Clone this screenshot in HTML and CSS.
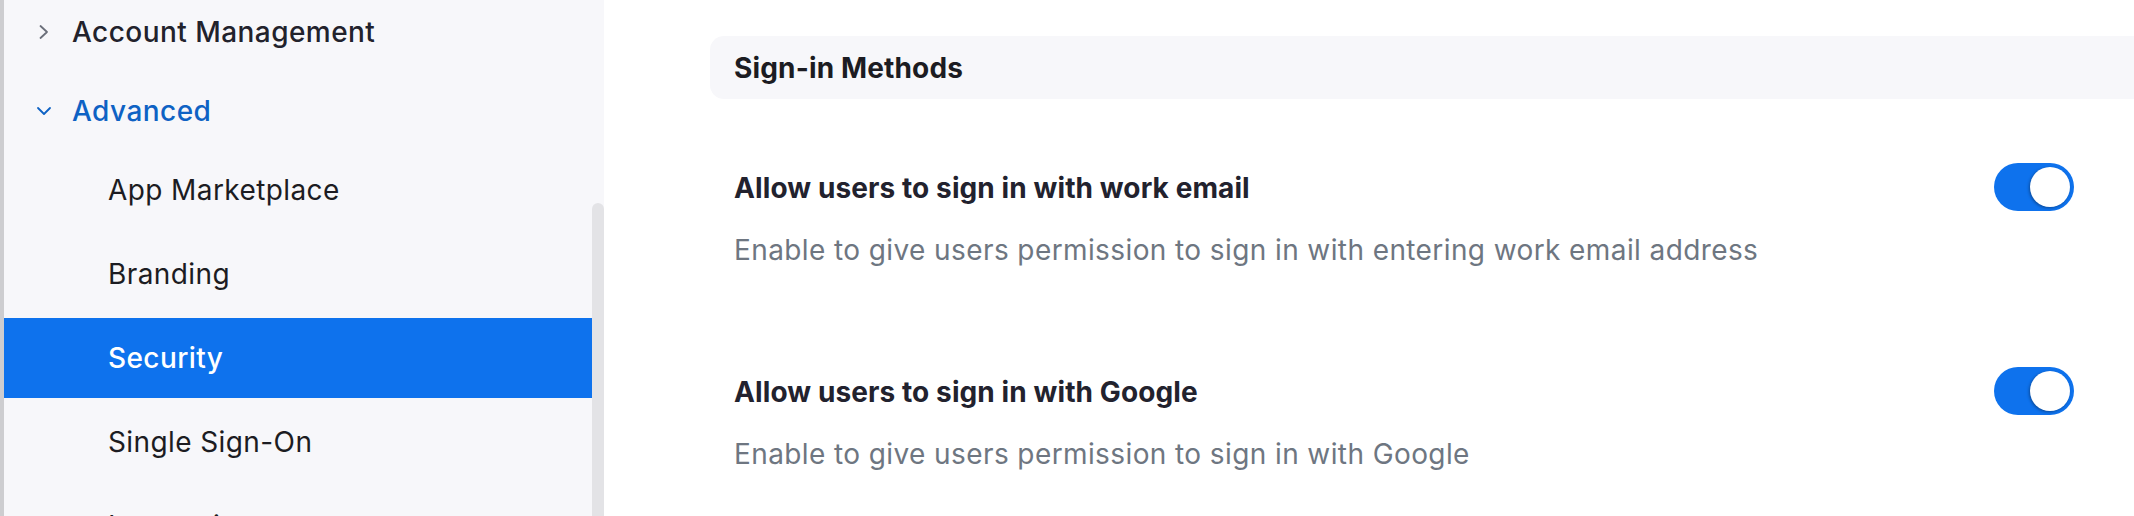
FILE: index.html
```html
<!DOCTYPE html>
<html lang="en">
<head>
<meta charset="utf-8">
<title>Security</title>
<link rel="stylesheet" href="styles.css">
</head>
<body>
  <aside class="sidebar">
    <nav class="nav">
      <div class="nav-item top">
        <svg class="chev" width="16" height="16" viewBox="0 0 16 16"><polyline points="4.5,2 11,8 4.5,14" fill="none" stroke="#6b6f7a" stroke-width="1.8" stroke-linecap="round" stroke-linejoin="round"/></svg>
        <span>Account Management</span>
      </div>
      <div class="nav-item top open">
        <svg class="chev" width="16" height="16" viewBox="0 0 16 16"><polyline points="2,5 8,11 14,5" fill="none" stroke="#0e62c4" stroke-width="1.8" stroke-linecap="round" stroke-linejoin="round"/></svg>
        <span>Advanced</span>
      </div>
      <div class="submenu">
        <div class="nav-item sub">App Marketplace</div>
        <div class="nav-item sub">Branding</div>
        <div class="nav-item sub active">Security</div>
        <div class="nav-item sub">Single Sign-On</div>
        <div class="nav-item sub">Integrations</div>
      </div>
    </nav>
    <div class="scrollbar"><div class="thumb"></div></div>
  </aside>
  <main class="content">
    <div class="section-head">Sign-in Methods</div>
    <div class="setting">
      <div class="setting-text">
        <div class="setting-title">Allow users to sign in with work email</div>
        <div class="setting-desc">Enable to give users permission to sign in with entering work email address</div>
      </div>
      <div class="toggle on"><div class="knob"></div></div>
    </div>
    <div class="setting">
      <div class="setting-text">
        <div class="setting-title">Allow users to sign in with Google</div>
        <div class="setting-desc">Enable to give users permission to sign in with Google</div>
      </div>
      <div class="toggle on"><div class="knob"></div></div>
    </div>
  </main>
</body>
</html>
```
FILE: styles.css
```css
html, body {
  margin: 0;
  padding: 0;
}
body {
  width: 2134px;
  height: 516px;
  overflow: hidden;
  display: flex;
  background: #ffffff;
  font-family: Inter, "Noto Sans", "Liberation Sans", sans-serif;
  font-size: 28px;
  letter-spacing: 0.4px;
  color: #22222c;
}
.sidebar {
  width: 600px;
  flex: none;
  display: flex;
  background: #f7f7fa;
  border-left: 4px solid #cdcdd0;
  height: 516px;
  overflow: hidden;
}
.nav {
  flex: 1;
  margin-top: -8px;
  display: flex;
  flex-direction: column;
}
.nav-item {
  height: 80px;
  display: flex;
  align-items: center;
  line-height: 34px;
  white-space: nowrap;
  flex: none;
}
.nav-item.top {
  padding-left: 32px;
  gap: 20px;
  font-weight: 500;
  letter-spacing: 0.45px;
  color: #22222c;
}
.nav-item.top.open {
  height: 78px;
  color: #0e62c4;
}
.chev {
  display: block;
  flex: none;
}
.submenu {
  display: flex;
  flex-direction: column;
  gap: 4px;
}
.nav-item.sub {
  padding-left: 104px;
  color: #1c1c22;
}
.nav-item.sub.active {
  background: #0e72ed;
  color: #ffffff;
  font-weight: 500;
}
.scrollbar {
  width: 12px;
  flex: none;
  padding-top: 203px;
}
.thumb {
  height: 400px;
  background: #e3e3e6;
  border-radius: 6px 6px 0 0;
}
.content {
  flex: none;
  width: 1450px;
  margin-left: 106px;
  padding-top: 36px;
}
.section-head {
  height: 63px;
  background: #f7f7fa;
  border-radius: 14px;
  display: flex;
  align-items: center;
  padding-left: 24px;
  font-weight: 700;
  letter-spacing: 0.15px;
  color: #1c1c22;
  line-height: 34px;
}
.setting {
  display: flex;
  align-items: flex-start;
  justify-content: space-between;
  padding: 72px 86px 36px 24px;
}
.setting-text {
  display: flex;
  flex-direction: column;
  gap: 28px;
}
.setting-title {
  font-weight: 700;
  letter-spacing: 0.1px;
  line-height: 34px;
  color: #22222e;
}
.setting-desc {
  line-height: 34px;
  color: #6e7681;
}
.toggle {
  width: 80px;
  height: 48px;
  border-radius: 24px;
  background: #0e72ed;
  margin-top: -8px;
  display: flex;
  align-items: center;
  justify-content: flex-end;
  padding: 0 4px;
  box-sizing: border-box;
  flex: none;
}
.knob {
  width: 40px;
  height: 40px;
  border-radius: 50%;
  background: #ffffff;
  box-shadow: -1px 1px 3px rgba(0, 0, 0, 0.35);
}
```
